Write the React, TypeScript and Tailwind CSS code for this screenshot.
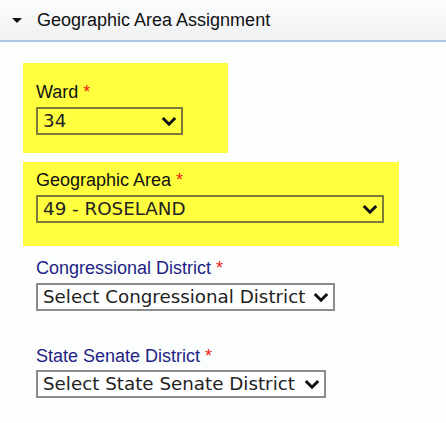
const Chevron = () => (
  <svg width="16" height="11" viewBox="0 0 16 11" className="shrink-0">
    <polyline points="1.8,2 8,8.2 14.2,2" fill="none" stroke="#111" strokeWidth="3" />
  </svg>
);

type FieldProps = {
  label: string;
  value: string;
  width: string;
  onYellow?: boolean;
  gap?: string;
};

function Field({ label, value, width, onYellow, gap = "mt-[5px]" }: FieldProps) {
  return (
    <div className="flex flex-col">
      <p
        className={`text-[18px] leading-5 ${onYellow ? "text-[#111111]" : "text-[#1f1f86]"}`}
        style={{ fontFamily: '"Liberation Sans", Arial, sans-serif' }}
      >
        {label} <span className="text-[#f01a0f]">*</span>
      </p>
      <div
        className={`${gap} ${width} h-[28px] flex items-center justify-between pl-[5px] pr-[4px] border-2 ${
          onYellow ? "border-[#7c7c3a] bg-[#ffff40]" : "border-[#8c8c8c] bg-white"
        }`}
      >
        <span
          className="text-[18.3px] leading-none text-[#222222] whitespace-nowrap"
          style={{ fontFamily: '"DejaVu Sans", Verdana, sans-serif' }}
        >
          {value}
        </span>
        <Chevron />
      </div>
    </div>
  );
}

export default function App() {
  return (
    <div className="w-[446px] h-[423px] bg-[#fcfdfd] overflow-hidden">
      <div className="h-[42px] flex items-center bg-gradient-to-b from-[#fbfcfc] to-[#eff1f3] border-b-2 border-[#a9c9e6]">
        <svg width="10" height="5" viewBox="0 0 10 5" className="ml-[12px] mt-[1px]">
          <polygon points="0,0 10,0 5,5" fill="#111" />
        </svg>
        <p
          className="ml-[15px] text-[18px] text-[#111111] leading-5"
          style={{ fontFamily: '"Liberation Sans", Arial, sans-serif' }}
        >
          Geographic Area Assignment
        </p>
      </div>

      <div className="pt-[21px] pl-[23px] flex flex-col items-start">
        <div className="w-[205px] bg-[#ffff40] pt-[19px] pb-[18px] pl-[13px]">
          <Field label="Ward" value="34" width="w-[147px]" onYellow />
        </div>
        <div className="mt-[9px] w-[376px] bg-[#ffff40] pt-[8px] pb-[23px] pl-[13px]">
          <Field label="Geographic Area" value="49 - ROSELAND" width="w-[348px]" onYellow />
        </div>
        <div className="mt-[12px] pl-[13px]">
          <Field label="Congressional District" value="Select Congressional District" width="w-[299px]" />
        </div>
        <div className="mt-[35px] pl-[13px]">
          <Field label="State Senate District" value="Select State Senate District" width="w-[290px]" gap="mt-[4px]" />
        </div>
      </div>
    </div>
  );
}
